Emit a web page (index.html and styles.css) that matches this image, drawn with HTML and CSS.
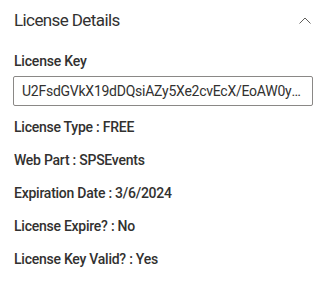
FILE: index.html
```html
<!DOCTYPE html>
<html lang="en">
<head>
    <meta charset="UTF-8">
    <meta name="viewport" content="width=device-width, initial-scale=1.0">
    <title>License Details</title>
    <link rel="stylesheet" href="styles.css">
</head>
<body>
    <div class="pane">
        <div class="group-header">
            <span class="group-title">License Details</span>
            <svg class="chevron" width="12" height="7" viewBox="0 0 12 7">
                <path d="M0.5 6.5 L6 1 L11.5 6.5" fill="none" stroke="#605e5c" stroke-width="1"/>
            </svg>
        </div>

        <label class="field-label" for="licenseKey">License Key</label>
        <input type="text" id="licenseKey" class="field-input" value="U2FsdGVkX19dDQsiAZy5Xe2cvEcX/EoAW0yQ8kLmZpT3vR" readonly>

        <div class="info-list">
            <div class="info-row">License Type : FREE</div>
            <div class="info-row">Web Part : SPSEvents</div>
            <div class="info-row">Expiration Date : 3/6/2024</div>
            <div class="info-row">License Expire? : No</div>
            <div class="info-row">License Key Valid? : Yes</div>
        </div>
    </div>
</body>
</html>
```

FILE: styles.css
```css
body {
    margin: 0;
    background: #ffffff;
    color: #323130;
    font-family: Roboto, "Open Sans", sans-serif;
}

.pane {
    display: flex;
    flex-direction: column;
    padding: 0 12px 0 13px;
}

.group-header {
    display: flex;
    align-items: center;
    justify-content: space-between;
    height: 40px;
}

.group-title {
    font-size: 17px;
    line-height: 24px;
    letter-spacing: -0.6px;
    padding-left: 1px;
}

.chevron {
    margin-right: 2px;
    margin-top: 1px;
}

.field-label {
    margin-top: 11px;
    padding-left: 1px;
    font-size: 14px;
    font-weight: 500;
    line-height: 20px;
    letter-spacing: -0.2px;
}

.field-input {
    margin-top: 5px;
    height: 30px;
    box-sizing: border-box;
    padding: 0 8px;
    border: 1px solid #8a8886;
    border-radius: 2px;
    font-family: inherit;
    font-size: 14px;
    letter-spacing: -0.25px;
    color: #323130;
    background: #ffffff;
    text-overflow: ellipsis;
    outline: none;
}

.info-list {
    display: flex;
    flex-direction: column;
    gap: 13px;
    margin-top: 11px;
}

.info-row {
    padding-left: 1px;
    font-size: 14px;
    font-weight: 500;
    line-height: 20px;
    letter-spacing: -0.25px;
}
```
